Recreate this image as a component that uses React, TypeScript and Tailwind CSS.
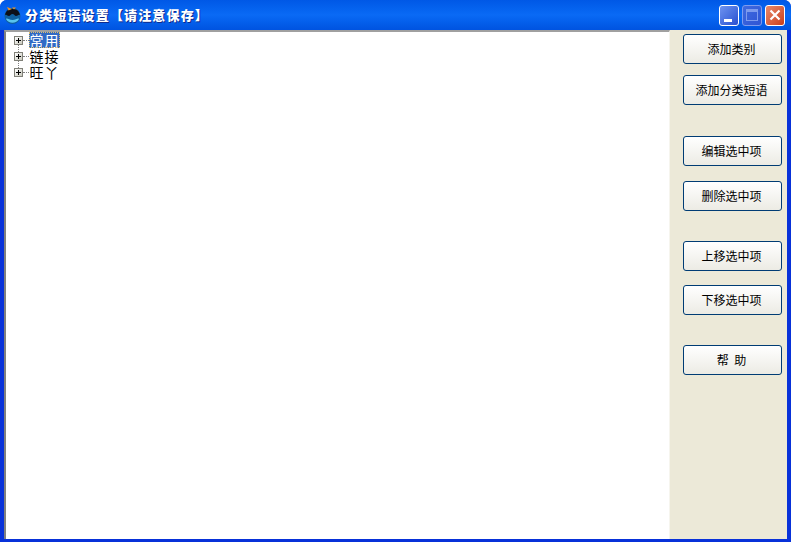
const buttons = [
  { label: '添加类别', className: 'mt-[4px]' },
  { label: '添加分类短语', className: 'mt-[11px]' },
  { label: '编辑选中项', className: 'mt-[31px]' },
  { label: '删除选中项', className: 'mt-[15px]' },
  { label: '上移选中项', className: 'mt-[30px]' },
  { label: '下移选中项', className: 'mt-[14px]' },
  { label: '帮  助', className: 'mt-[30px]' },
];

const treeItems = ['常用', '链接', '旺丫'];

function AppIcon() {
  return (
    <svg width="17" height="18" viewBox="0 0 17 18" className="shrink-0">
      <circle cx="8.500" cy="10" r="8" fill="#0f5f9e" />
      <path d="M2 13a7.500 7.500 0 0 0 13 0c-1-1.500-3 1-6.500 1S3 11.500 2 13z" fill="#58c4ee" />
      <path d="M1 9c1-4 3-6 7.500-6S15 5 16 9c-2-1-2 1-4 1-1 0-2-2-3.500-2S6 10 5 10C3 10 3 8 1 9z" fill="#0c0f18" />
      <path d="M3 1l1.500 3.500L8 3zM8 1.500h4L10 3.500z" fill="#e8922a" />
    </svg>
  );
}

function Expander() {
  return (
    <span className="flex h-[9px] w-[9px] shrink-0 items-center justify-center border border-[#808078] bg-gradient-to-br from-white to-[#c8c8bc]">
      <svg width="7" height="7" viewBox="0 0 7 7">
        <path d="M1 3.500h5M3.500 1v5" stroke="#000" strokeWidth="1" />
      </svg>
    </span>
  );
}

export default function App() {
  return (
    <div className="flex h-[542px] w-[791px] flex-col overflow-hidden rounded-t-[7px] bg-[#0831d9] font-['Noto_Sans_CJK_SC',sans-serif]">
      {/* Title bar */}
      <div className="flex h-[30px] shrink-0 items-center bg-gradient-to-b from-[#0058e6] via-[#0a6af5] to-[#0053e0] pl-[4px] pr-[6px]">
        <AppIcon />
        <span className="ml-[4px] whitespace-nowrap text-[13px] font-black tracking-[1.15px] text-white [text-shadow:1px_1px_0_#0f2a8c]">
          分类短语设置【请注意保存】
        </span>
        <div className="ml-auto flex gap-[3px]">
          <div className="flex h-[21px] w-[20px] items-end rounded-[3px] border border-white bg-gradient-to-br from-[#6f93f0] to-[#2a4fd0] pb-[3px] pl-[4px]">
            <div className="h-[3px] w-[8px] bg-white" />
          </div>
          <div className="flex h-[21px] w-[20px] items-center justify-center rounded-[3px] border border-[#7d9bee] bg-gradient-to-br from-[#3f6ae0] to-[#2f55d4]">
            <div className="h-[12px] w-[12px] border border-t-[3px] border-[#7d9bee]" />
          </div>
          <div className="flex h-[21px] w-[20px] items-center justify-center rounded-[3px] border border-white bg-gradient-to-br from-[#e8896a] to-[#c83c16]">
            <svg width="12" height="12" viewBox="0 0 12 12">
              <path d="M1.500 1.500l9 9M10.500 1.500l-9 9" stroke="#fff" strokeWidth="2.200" />
            </svg>
          </div>
        </div>
      </div>

      {/* Client area */}
      <div className="mx-[4px] mb-[3px] flex min-h-0 flex-1 bg-[#ece9d8]">
        <div className="w-[666px] shrink-0 border-l-2 border-t-2 border-r border-l-[#808080] border-t-[#a0a0a0] border-r-[#f6f5ee] bg-white">
          <ul className="relative ml-[8px]">
            <li className="absolute left-[4px] top-[8px] h-[32px] border-l border-dotted border-[#808080]" />
            {treeItems.map((item, i) => (
              <li key={item} className="relative flex h-[16px] items-center">
                <Expander />
                <span className="w-[6px] border-t border-dotted border-[#808080]" />
                <span
                  className={
                    i === 0
                      ? 'flex h-[16px] w-[31px] items-center justify-center whitespace-nowrap bg-[#316ac5] pb-[1px] text-[14px] leading-none tracking-[1px] text-white outline outline-1 -outline-offset-1 outline-dotted outline-[#e0c070]'
                      : 'flex h-[16px] w-[31px] items-center justify-center whitespace-nowrap pb-[1px] text-[14px] leading-none tracking-[1px] text-black'
                  }
                >
                  {item}
                </span>
              </li>
            ))}
          </ul>
        </div>
        <div className="flex flex-1 flex-col items-start pl-[13px]">
          {buttons.map((b) => (
            <button
              key={b.label}
              className={`h-[30px] w-[99px] whitespace-pre rounded-[3px] border border-[#003c74] bg-gradient-to-b from-white to-[#ecebe4] pr-[2px] text-[12px] leading-none text-black ${b.className}`}
            >
              {b.label}
            </button>
          ))}
        </div>
      </div>
    </div>
  );
}
